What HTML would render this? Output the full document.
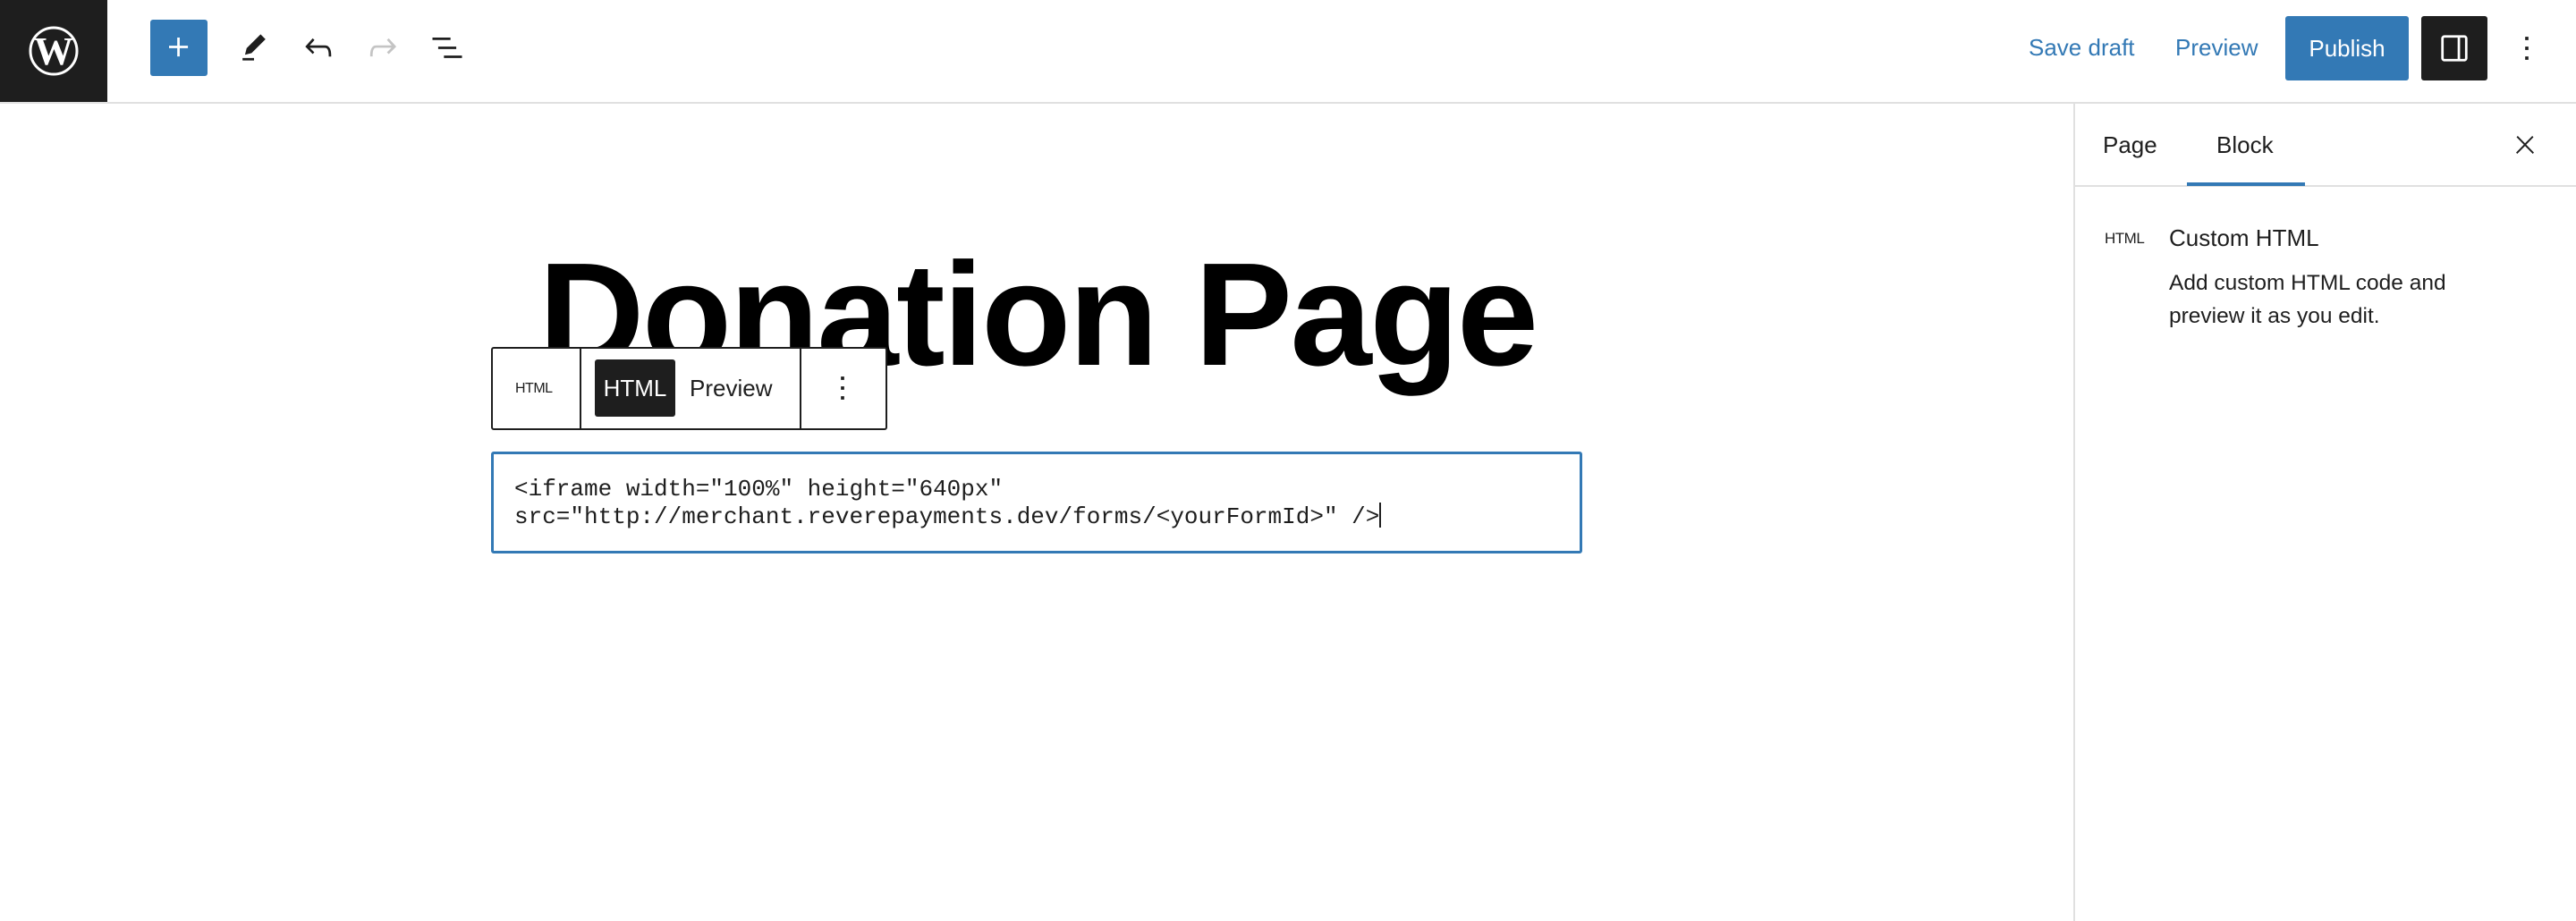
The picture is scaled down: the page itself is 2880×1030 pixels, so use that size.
<!DOCTYPE html>
<html><head><meta charset="utf-8"><style>
*{margin:0;padding:0;box-sizing:border-box}
body{width:2880px;height:1030px;background:#fff;position:relative;overflow:hidden;font-family:"Liberation Sans",sans-serif;color:#1e1e1e}
.a{position:absolute}
svg.i{position:absolute;width:44px;height:44px}
</style></head><body>
<!-- header -->
<div class="a" style="left:0;top:0;width:120px;height:115px;background:#1e1e1e"></div>
<svg class="a" style="left:30px;top:27px" width="60" height="60" viewBox="0 0 60 60"><circle cx="30" cy="30" r="26" fill="none" stroke="#fff" stroke-width="3"/><text x="30" y="45" text-anchor="middle" font-family="Liberation Serif,serif" font-weight="bold" font-size="44" fill="#fff">W</text></svg>
<div class="a" style="left:0;top:114px;width:2880px;height:2px;background:#e0e0e0"></div>
<div class="a" style="left:168px;top:22px;width:64px;height:63px;background:#3379b5;border-radius:3px"></div>
<svg class="i" style="left:178px;top:31px" viewBox="0 0 24 24"><path fill="#fff" d="M11 12.5V17.5H12.5V12.5H17.5V11H12.5V6H11V11H6V12.5H11Z"/></svg>
<svg class="i" style="left:262px;top:31px" viewBox="0 0 24 24"><path fill="#1e1e1e" d="m19 7-3-3-8.5 8.5-1 4 4-1L19 7Zm-7 11.5H5V20h7v-1.5Z"/></svg>
<svg class="i" style="left:334px;top:31px" viewBox="0 0 24 24"><path fill="#1e1e1e" d="M18.3 11.7c-.6-.6-1.4-.9-2.3-.9H6.7l2.9-3.3-1.1-1-4.5 5L8.5 16l1-1-2.7-2.7H16c.5 0 .9.2 1.3.5 1 1 1 3.4 1 4.5v.3h1.5v-.2c0-1.5 0-4.300-1.5-5.7z"/></svg>
<svg class="i" style="left:406px;top:31px" viewBox="0 0 24 24"><path fill="#c4c4c4" d="M15.6 6.5l-1.1 1 2.9 3.3H8c-.9 0-1.7.3-2.3.9-1.4 1.5-1.4 4.2-1.4 5.6v.2h1.5v-.3c0-1.1 0-3.5 1-4.5.3-.3.7-.5 1.3-.5h9.2L14.5 15l1.1 1.1 4.6-4.6-4.6-5z"/></svg>
<svg class="i" style="left:478px;top:31px" viewBox="0 0 24 24"><path fill="#1e1e1e" d="M3 6h11v1.5H3V6Zm3.5 5.5h11V13h-11v-1.5ZM21 17H10v1.5h11V17Z"/></svg>

<div class="a" style="left:2268px;top:37px;font-size:26px;color:#3379b5;line-height:32px">Save draft</div>
<div class="a" style="left:2432px;top:37px;font-size:26px;color:#3379b5;line-height:32px">Preview</div>
<div class="a" style="left:2555px;top:18px;width:138px;height:72px;background:#3379b5;border-radius:3px;color:#fff;font-size:26px;line-height:72px;text-align:center">Publish</div>
<div class="a" style="left:2707px;top:18px;width:74px;height:72px;background:#1e1e1e;border-radius:3px"></div>
<svg class="i" style="left:2722px;top:32px" viewBox="0 0 24 24"><path fill="#fff" d="M18 4H6c-1.1 0-2 .9-2 2v12c0 1.1.9 2 2 2h12c1.1 0 2-.9 2-2V6c0-1.1-.9-2-2-2zm-4 14.5H6c-.3 0-.5-.2-.5-.5V6c0-.3.2-.5.5-.5h8v13zm4.5-.5c0 .3-.2.5-.5.5h-2.5v-13H18c.3 0 .5.2.5.5v12z"/></svg>
<svg class="i" style="left:2803px;top:32px" viewBox="0 0 24 24"><path fill="#1e1e1e" d="M13 19h-2v-2h2v2zm0-6h-2v-2h2v2zm0-6h-2V5h2v2z"/></svg>

<!-- sidebar -->
<div class="a" style="left:2318px;top:115px;width:2px;height:915px;background:#e0e0e0"></div>
<div class="a" style="left:2320px;top:207px;width:560px;height:2px;background:#e0e0e0"></div>
<div class="a" style="left:2351px;top:146px;font-size:26px;line-height:32px">Page</div>
<div class="a" style="left:2478px;top:146px;font-size:26px;line-height:32px">Block</div>
<div class="a" style="left:2445px;top:204px;width:132px;height:4px;background:#3379b5"></div>
<svg class="a" style="left:2807px;top:146px" width="32" height="32" viewBox="0 0 24 24"><path fill="#1e1e1e" d="M13 11.8l6.1-6.3-1-1-6.1 6.2-6.1-6.2-1 1 6.1 6.3-6.5 6.7 1 1 6.5-6.6 6.5 6.6 1-1z"/></svg>
<div class="a" style="left:2353px;top:258px;font-size:17px;line-height:18px;letter-spacing:-0.5px">HTML</div>
<div class="a" style="left:2425px;top:250px;font-size:26px;line-height:32px">Custom HTML</div>
<div class="a" style="left:2425px;top:298px;font-size:24.5px;line-height:37px;width:365px">Add custom HTML code and preview it as you edit.</div>

<!-- content -->
<div class="a" style="left:602px;top:242px;font-size:164px;font-weight:bold;letter-spacing:-2.5px;line-height:220px;white-space:nowrap;color:#000">Donation Page</div>

<div class="a" style="left:549px;top:388px;width:443px;height:93px;background:#fff;border:2px solid #1e1e1e;border-radius:3px"></div>
<div class="a" style="left:648px;top:390px;width:2px;height:89px;background:#1e1e1e"></div>
<div class="a" style="left:894px;top:390px;width:2px;height:89px;background:#1e1e1e"></div>
<div class="a" style="left:576px;top:426px;font-size:16px;line-height:18px;letter-spacing:-0.5px">HTML</div>
<div class="a" style="left:665px;top:402px;width:90px;height:64px;background:#1e1e1e;border-radius:3px;color:#fff;font-size:26px;line-height:64px;text-align:center">HTML</div>
<div class="a" style="left:771px;top:418px;font-size:26px;line-height:32px">Preview</div>
<svg class="i" style="left:920px;top:412px" viewBox="0 0 24 24"><path fill="#1e1e1e" d="M13 19h-2v-2h2v2zm0-6h-2v-2h2v2zm0-6h-2V5h2v2z"/></svg>

<div class="a" style="left:549px;top:505px;width:1220px;height:114px;border:3px solid #3379b5;border-radius:3px"></div>
<div class="a" style="left:575px;top:532px;font-family:'Liberation Mono','DejaVu Sans Mono',monospace;font-size:26px;line-height:30px;white-space:pre;color:#1e1e1e">&lt;iframe width="100%" height="640px"
src="http://merchant.reverepayments.dev/forms/&lt;yourFormId&gt;" /&gt;<span style="display:inline-block;width:2px;height:28px;background:#1e1e1e;vertical-align:-5px"></span></div>
</body></html>
